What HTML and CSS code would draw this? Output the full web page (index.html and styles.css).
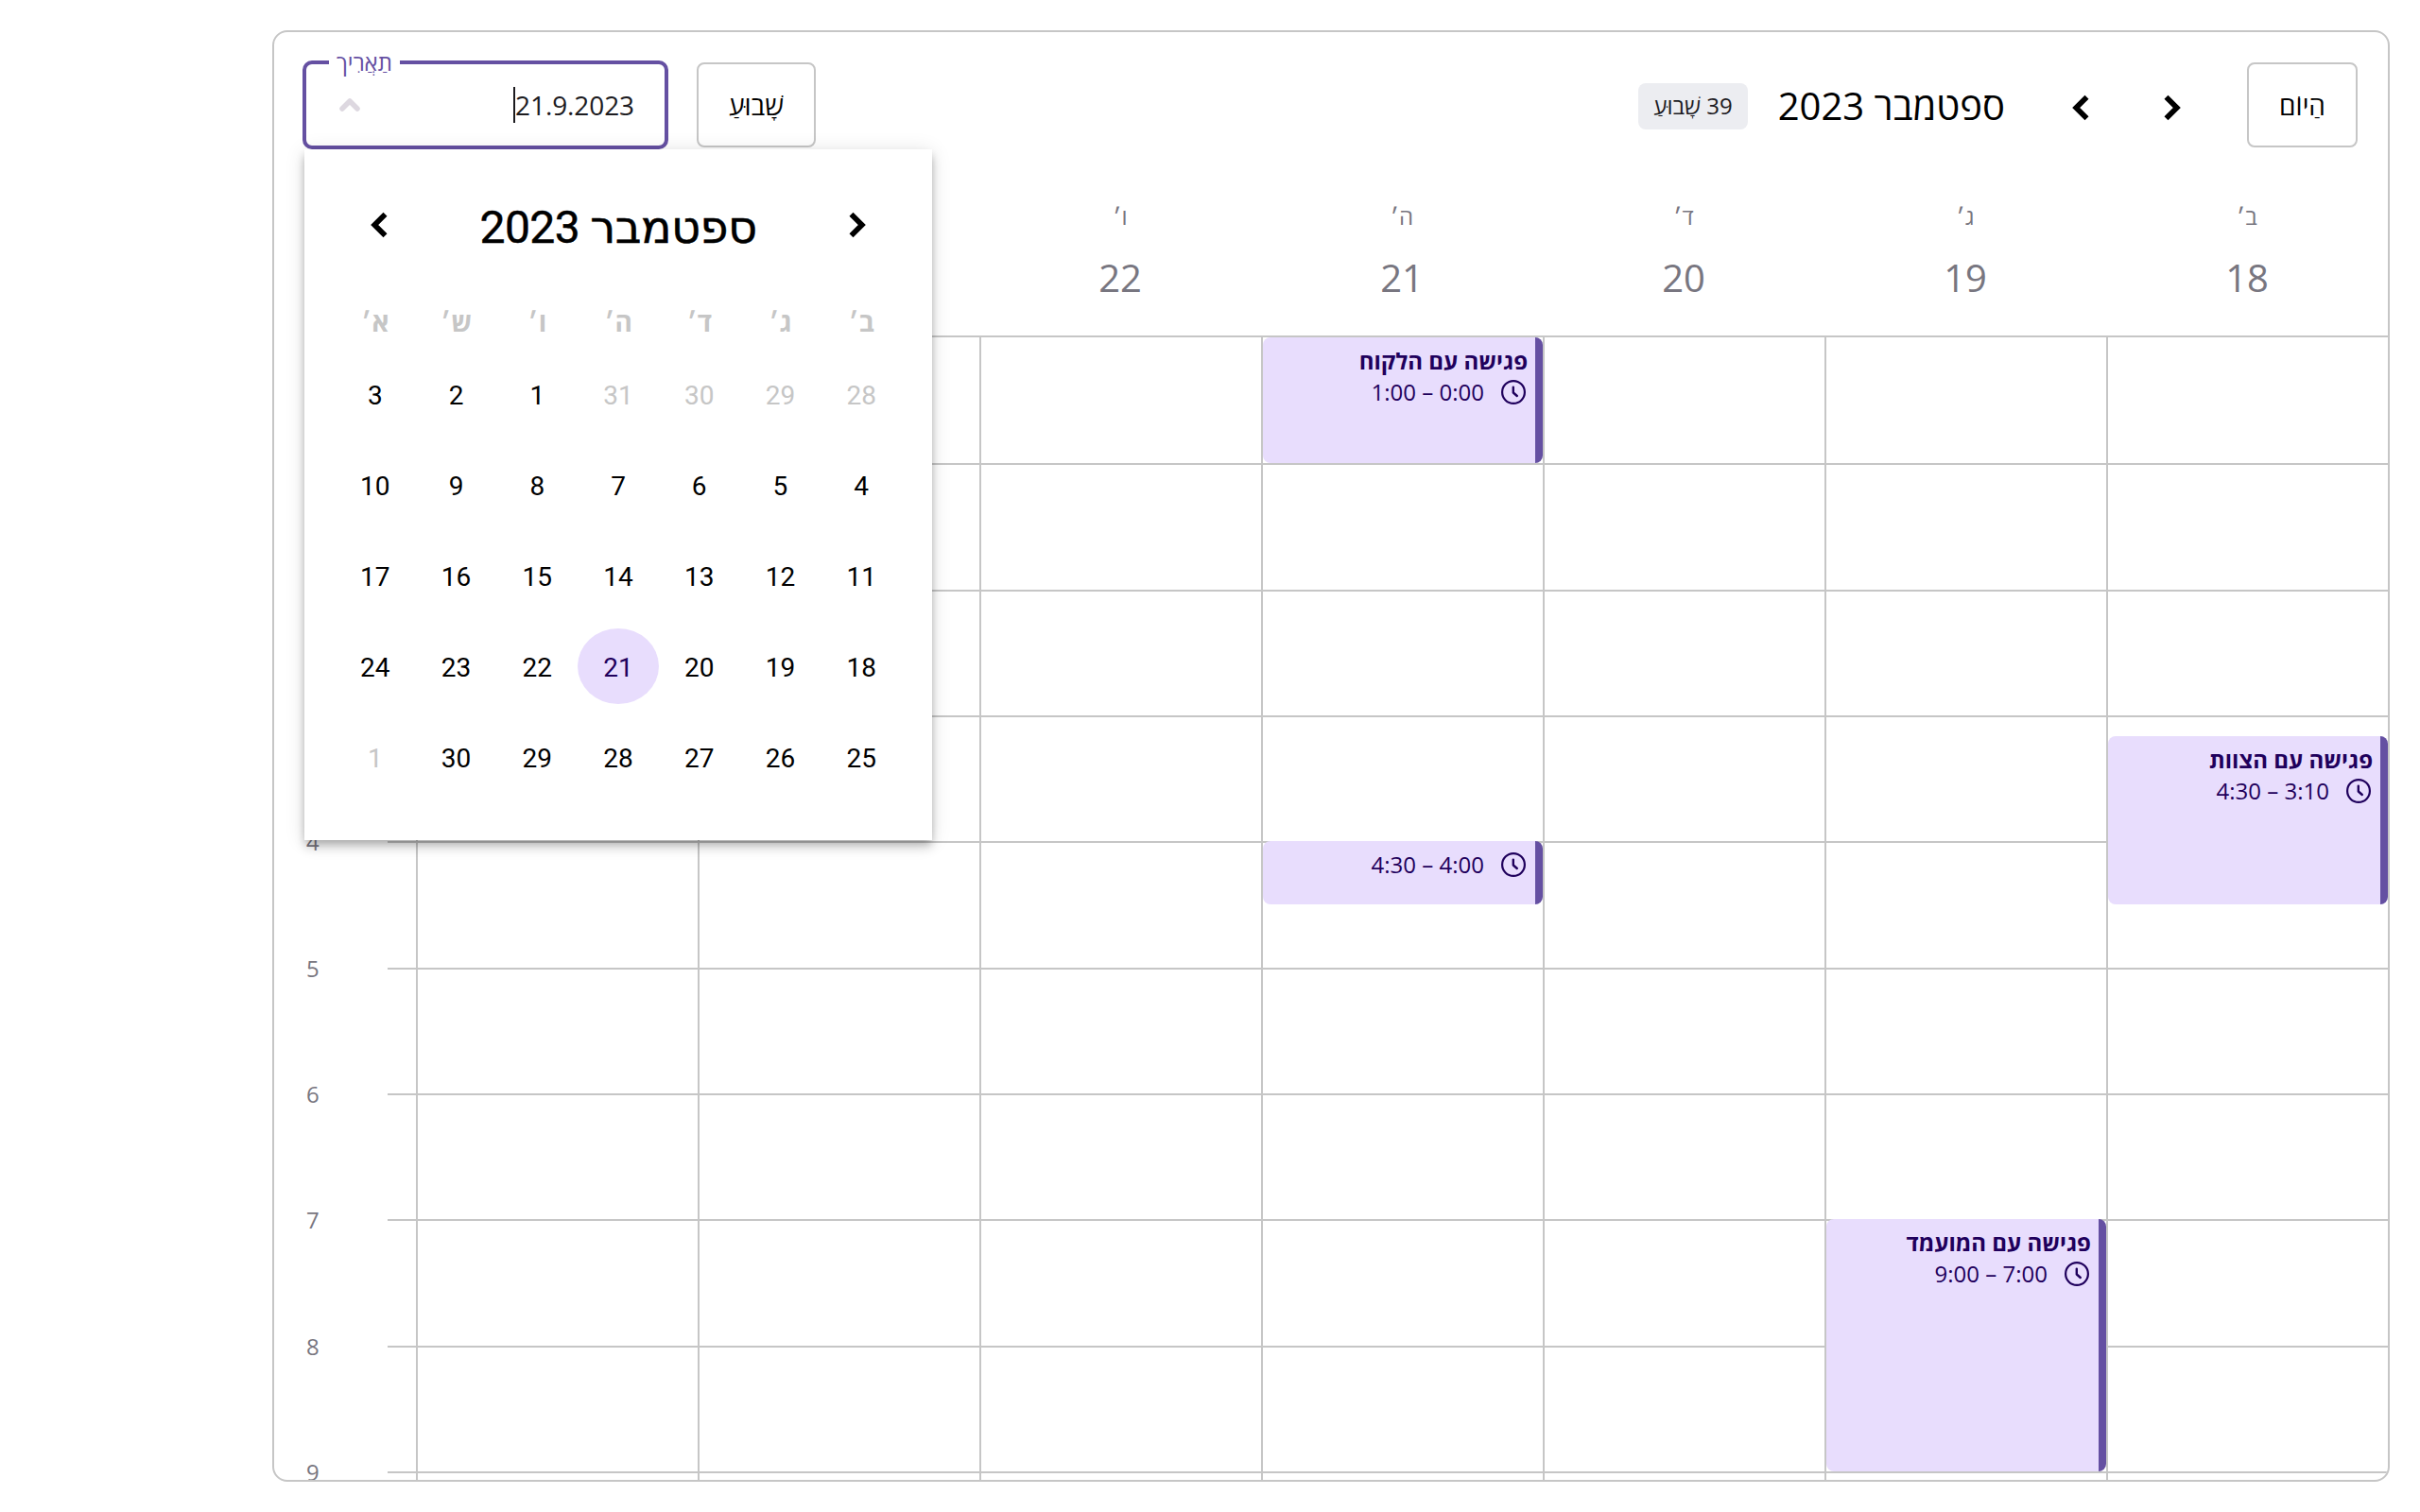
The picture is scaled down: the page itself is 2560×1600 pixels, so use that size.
FILE: index.html
```html
<!DOCTYPE html>
<html lang="he" dir="rtl">
<head>
<meta charset="utf-8">
<title>ספטמבר 2023</title>
<link rel="stylesheet" href="styles.css">
</head>
<body>
<svg class="defs" width="0" height="0" aria-hidden="true">
  <symbol id="clock" viewBox="0 0 26 26">
    <circle cx="13" cy="13" r="11.9" fill="none" stroke="currentColor" stroke-width="2.2"/>
    <path d="M12.8 7.6v5.9l4 3.5" fill="none" stroke="currentColor" stroke-width="2.4" stroke-linecap="round" stroke-linejoin="round"/>
  </symbol>
  <symbol id="left" viewBox="0 0 18 28">
    <path d="M15.5 2.7 4.2 14l11.3 11.3" fill="none" stroke="currentColor" stroke-width="5.7"/>
  </symbol>
  <symbol id="right" viewBox="0 0 18 28">
    <path d="M2.5 2.7 13.8 14 2.5 25.3" fill="none" stroke="currentColor" stroke-width="5.7"/>
  </symbol>
</svg>
<main class="calendar">
  <header class="toolbar">
    <button class="btn today">הַיוֹם</button>
    <button class="arrow forward"><svg><use href="#right"/></svg></button>
    <button class="arrow back"><svg><use href="#left"/></svg></button>
    <h1 class="range">ספטמבר 2023</h1>
    <span class="week-badge">39 שָׁבוּעַ</span>
    <span class="spacer"></span>
    <button class="btn view">שָׁבוּעַ</button>
    <div class="field">
      <span class="field-label">תַאֲרִיך</span>
      <span class="field-value">21.9.2023</span>
      <svg class="field-toggle" viewBox="0 0 24 16"><path d="M4 12l8-8 8 8" fill="none" stroke="currentColor" stroke-width="5.5" stroke-linecap="round" stroke-linejoin="round"/></svg>
      <div class="picker">
        <div class="picker-head">
          <button class="arrow"><svg><use href="#right"/></svg></button>
          <h2>ספטמבר 2023</h2>
          <button class="arrow"><svg><use href="#left"/></svg></button>
        </div>
        <div class="picker-week">
          <span>ב׳</span><span>ג׳</span><span>ד׳</span><span>ה׳</span><span>ו׳</span><span>ש׳</span><span>א׳</span>
        </div>
        <div class="picker-grid">
          <span class="out">28</span><span class="out">29</span><span class="out">30</span><span class="out">31</span><span>1</span><span>2</span><span>3</span>
          <span>4</span><span>5</span><span>6</span><span>7</span><span>8</span><span>9</span><span>10</span>
          <span>11</span><span>12</span><span>13</span><span>14</span><span>15</span><span>16</span><span>17</span>
          <span>18</span><span>19</span><span>20</span><span class="selected">21</span><span>22</span><span>23</span><span>24</span>
          <span>25</span><span>26</span><span>27</span><span>28</span><span>29</span><span>30</span><span class="out">1</span>
        </div>
      </div>
    </div>
  </header>

  <div class="week-head">
    <div class="day-head"><span>ב<i>׳</i></span><b>18</b></div>
    <div class="day-head"><span>ג<i>׳</i></span><b>19</b></div>
    <div class="day-head"><span>ד<i>׳</i></span><b>20</b></div>
    <div class="day-head"><span>ה<i>׳</i></span><b>21</b></div>
    <div class="day-head"><span>ו<i>׳</i></span><b>22</b></div>
    <div class="day-head"></div>
    <div class="day-head"></div>
  </div>

  <div class="week-body">
    <div class="hours">
      <div class="hour"><i></i><span></span></div>
      <div class="hour"><i></i><span></span></div>
      <div class="hour"><i></i><span></span></div>
      <div class="hour"><i></i><span></span></div>
      <div class="hour"><i></i><span>4</span></div>
      <div class="hour"><i></i><span>5</span></div>
      <div class="hour"><i></i><span>6</span></div>
      <div class="hour"><i></i><span>7</span></div>
      <div class="hour"><i></i><span>8</span></div>
      <div class="hour"><i></i><span>9</span></div>
    </div>
    <div class="days">
      <div class="day">
        <article class="event" style="--start:3.1667;--length:1.3333"><h3>פגישה עם הצוות</h3><p><svg><use href="#clock"/></svg>3:10 – 4:30</p></article>
      </div>
      <div class="day">
        <article class="event" style="--start:7;--length:2"><h3>פגישה עם המועמד</h3><p><svg><use href="#clock"/></svg>7:00 – 9:00</p></article>
      </div>
      <div class="day"></div>
      <div class="day">
        <article class="event" style="--start:0;--length:1"><h3>פגישה עם הלקוח</h3><p><svg><use href="#clock"/></svg>0:00 – 1:00</p></article>
        <article class="event" style="--start:4;--length:0.5"><p><svg><use href="#clock"/></svg>4:00 – 4:30</p></article>
      </div>
      <div class="day"></div>
      <div class="day"></div>
      <div class="day"></div>
    </div>
  </div>
</main>
</body>
</html>
```
FILE: styles.css
```css
:root {
  --line: #c6c6c6;
  --muted: #787680;
  --primary: #6550a2;
  --tint: #e8ddfd;
  --ink: #1f005c;
  --hour: 133.3333px;
}
* { box-sizing: border-box; }
body {
  margin: 0;
  height: 1600px;
  overflow: hidden;
  padding: 32px 32px 32px 288px;
  background: #fff;
  color: #000;
  font-family: "Open Sans", "Noto Sans", "DejaVu Sans", sans-serif;
}
.defs { position: absolute; }
h1, h2, h3, p { margin: 0; font-weight: 400; }
button { font: inherit; color: inherit; background: none; border: 0; padding: 0; }

.calendar {
  display: flex;
  flex-direction: column;
  height: 1536px;
  border: 2px solid var(--line);
  border-radius: 16px;
  overflow: hidden;
}

/* toolbar */
.toolbar {
  display: flex;
  align-items: center;
  flex: none;
  height: 154px;
  padding: 0 32px 0 30px;
}
.btn {
  height: 90px;
  border: 2px solid var(--line);
  border-radius: 8px;
  font-size: 28px;
}
.today { width: 117px; }
.view { width: 126px; margin-left: 30px; }
.arrow { display: flex; width: 18px; height: 28px; }
.arrow svg { width: 18px; height: 28px; }
.toolbar > .arrow { margin-top: 6px; }
.forward { margin-right: 70px; }
.back { margin: 0 79px 0 71px; }
.range { font-size: 40px; font-weight: 450; line-height: 56px; width: 240px; margin-top: 2px; white-space: nowrap; }
.week-badge {
  width: 116px;
  height: 49px;
  margin: 2px 32px 0 0;
  border-radius: 8px;
  background: #ecedf1;
  color: #1c1b1f;
  font-size: 24px;
  line-height: 48px;
  text-align: center;
  white-space: nowrap;
}
.spacer { flex: 1; }

/* date field */
.field {
  position: relative;
  z-index: 2;
  display: flex;
  align-items: center;
  justify-content: space-between;
  width: 387px;
  height: 94px;
  padding: 0 32px 0 34px;
  border: 4px solid var(--primary);
  border-radius: 10px;
}
.field-label {
  position: absolute;
  left: 24px;
  top: -17px;
  width: 75px;
  height: 30px;
  background: #fff;
  color: var(--primary);
  font-size: 24px;
  line-height: 29px;
  text-align: center;
}
.field-value {
  border-left: 2px solid #1c1b1f;
  color: #1c1b1f;
  font-size: 28px;
  line-height: 38px;
  letter-spacing: -0.1px;
}
.field-toggle { width: 24px; height: 16px; color: #ddd8e0; }

/* month picker */
.picker {
  position: absolute;
  left: -2px;
  top: 90px;
  width: 664px;
  height: 731px;
  padding: 40px 32px 48px;
  background: #fff;
  box-shadow: 0 4px 8px -2px rgba(0,0,0,.2), 0 8px 10px 0 rgba(0,0,0,.14), 0 2px 20px 0 rgba(0,0,0,.12);
  font-family: Roboto, "DejaVu Sans", sans-serif;
}
.picker-head {
  display: flex;
  align-items: center;
  justify-content: space-between;
  height: 80px;
  padding: 0 38px;
}
.picker-head h2 { font-size: 48px; line-height: 80px; padding-top: 5px; white-space: nowrap; letter-spacing: -.6px; -webkit-text-stroke: .5px currentColor; }
.picker-week, .picker-grid { display: grid; grid-template-columns: repeat(7, 1fr); text-align: center; }
.picker-week { height: 99px; padding-top: 42px; color: var(--line); font-family: Roboto, "Open Sans", sans-serif; font-size: 28px; font-weight: 700; line-height: 44px; }
.picker-grid { grid-auto-rows: 80px; row-gap: 16px; font-size: 28px; font-weight: 450; line-height: 84px; }
.out { color: var(--line); }
.selected { border-radius: 50%; background: var(--tint); color: var(--ink); }

/* week view */
.week-head {
  display: grid;
  grid-template-columns: repeat(7, 298px);
  flex: none;
  height: 169px;
  margin-left: 120px;
  border-bottom: 2px solid var(--line);
  color: var(--muted);
}
.day-head { display: flex; flex-direction: column; align-items: center; }
.day-head span { font-size: 24px; line-height: 34px; padding-top: 24px; }
.day-head i { font-family: "Liberation Sans", sans-serif; font-style: normal; line-height: 1; }
.day-head b { font-size: 40px; font-weight: 400; line-height: 56px; padding-top: 20px; }

.week-body { display: grid; flex: 1; min-height: 0; overflow: hidden; }
.hours, .days { grid-area: 1 / 1; }
.hour { display: flex; height: var(--hour); }
.hour i { flex: 1; border-top: 2px solid var(--line); }
.hour:first-child i { border-top: 0; }
.hour span {
  width: 120px;
  height: 34px;
  margin-top: -16px;
  padding-left: 34px;
  color: var(--muted);
  font-size: 24px;
  line-height: 34px;
  text-align: left;
}
.hour i { margin-left: -30px; }
.hour span { width: 150px; }
.days { display: grid; grid-template-columns: repeat(7, 298px); height: 1400px; }
.day { position: relative; border-left: 2px solid var(--line); }

.event {
  position: absolute;
  left: 0;
  right: 0;
  top: calc(var(--start) * var(--hour));
  height: calc(var(--length) * var(--hour));
  padding: 8px 8px 0 0;
  border-right: 8px solid var(--primary);
  border-radius: 8px;
  background: var(--tint);
  color: var(--ink);
  font-size: 24px;
  line-height: 33px;
}
.event h3 { font-size: 24px; font-weight: 700; line-height: 33px; }
.event p { display: flex; align-items: center; gap: 18px; padding-right: 2px; }
.event svg { width: 26px; height: 26px; }
```
